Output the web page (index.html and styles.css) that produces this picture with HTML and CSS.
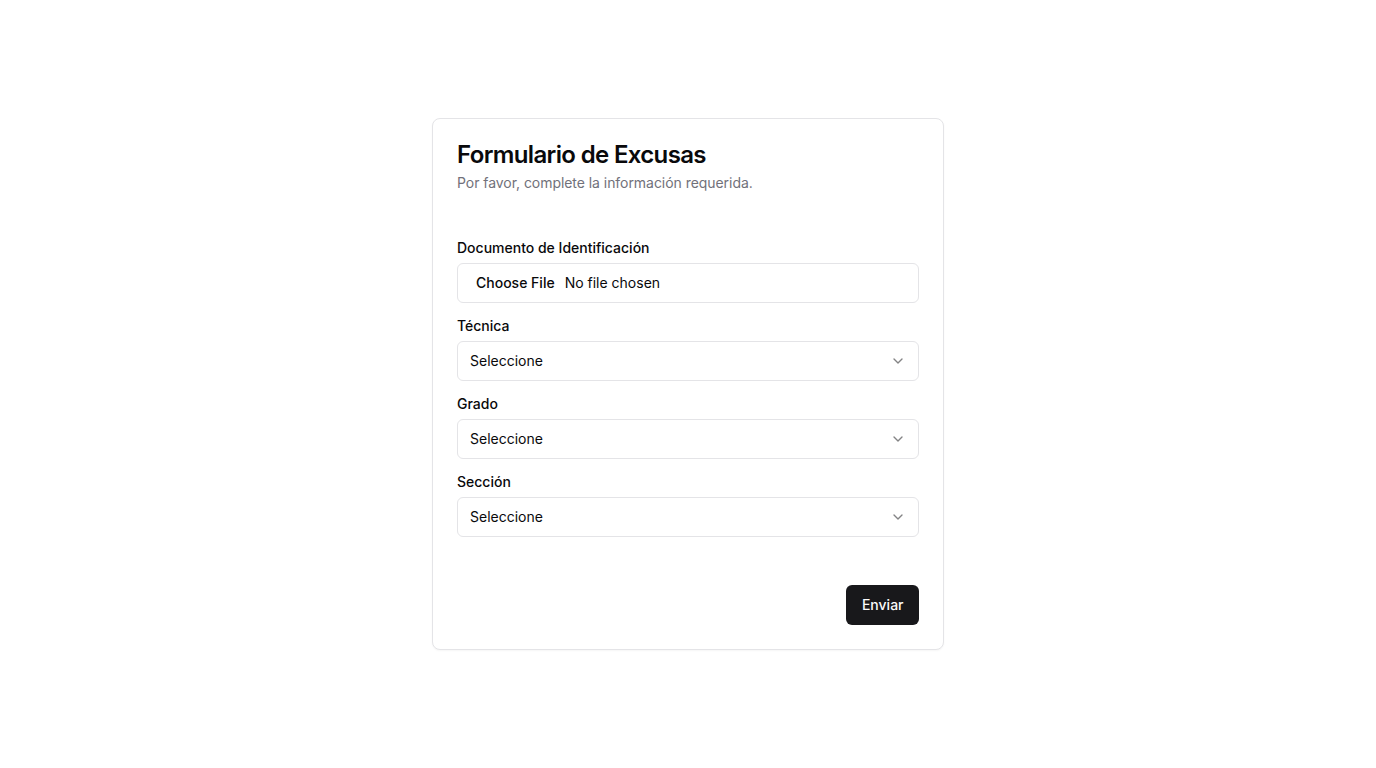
FILE: index.html
```html
<!DOCTYPE html>
<html lang="es">
<head>
<meta charset="utf-8">
<title>Formulario de Excusas</title>
<link rel="stylesheet" href="styles.css">
</head>
<body>
<main class="page">
  <section class="card">
    <header class="card-header">
      <h1 class="card-title">Formulario de Excusas</h1>
      <p class="card-desc">Por favor, complete la información requerida.</p>
    </header>
    <form class="form">
      <div class="fields">
        <div class="field">
          <span class="label">Documento de Identificación</span>
          <label class="control file-control">
            <span class="file-btn">Choose File</span>
            <span class="file-name">No file chosen</span>
            <input type="file" class="file-input">
          </label>
        </div>
        <div class="field">
          <span class="label">Técnica</span>
          <button type="button" class="control select">
            <span>Seleccione</span>
            <svg class="chev" viewBox="0 0 24 24" width="16" height="16" fill="none" stroke="currentColor" stroke-width="2" stroke-linecap="round" stroke-linejoin="round"><path d="m6 9 6 6 6-6"/></svg>
          </button>
        </div>
        <div class="field">
          <span class="label">Grado</span>
          <button type="button" class="control select">
            <span>Seleccione</span>
            <svg class="chev" viewBox="0 0 24 24" width="16" height="16" fill="none" stroke="currentColor" stroke-width="2" stroke-linecap="round" stroke-linejoin="round"><path d="m6 9 6 6 6-6"/></svg>
          </button>
        </div>
        <div class="field">
          <span class="label">Sección</span>
          <button type="button" class="control select">
            <span>Seleccione</span>
            <svg class="chev" viewBox="0 0 24 24" width="16" height="16" fill="none" stroke="currentColor" stroke-width="2" stroke-linecap="round" stroke-linejoin="round"><path d="m6 9 6 6 6-6"/></svg>
          </button>
        </div>
      </div>
      <div class="actions">
        <button type="submit" class="btn">Enviar</button>
      </div>
    </form>
  </section>
</main>
</body>
</html>
```
FILE: styles.css
```css
* { box-sizing: border-box; }
html, body { margin: 0; padding: 0; }
body {
  font-family: Inter, "Noto Sans", sans-serif;
  color: #09090b;
  background: #ffffff;
}
.page {
  min-height: 100vh;
  display: flex;
  align-items: center;
  justify-content: center;
}
.card {
  width: 512px;
  border: 1px solid #e4e4e7;
  border-radius: 8px;
  background: #fff;
  box-shadow: 0 1px 2px rgba(0,0,0,0.04);
  padding: 24px;
}
.card-header {
  display: flex;
  flex-direction: column;
  gap: 6px;
}
.card-title {
  margin: 0;
  font-size: 24px;
  line-height: 24px;
  font-weight: 600;
  letter-spacing: -0.65px;
}
.card-desc {
  margin: 0;
  font-size: 14px;
  line-height: 20px;
  color: #71717a;
  letter-spacing: -0.05px;
}
.form {
  margin-top: 44px;
}
.fields {
  display: flex;
  flex-direction: column;
  gap: 12px;
}
.field {
  display: flex;
  flex-direction: column;
  gap: 5px;
}
.label {
  font-size: 14px;
  line-height: 20px;
  padding-top: 1px;
  font-weight: 500;
}
.control {
  height: 40px;
  width: 100%;
  border: 1px solid #e4e4e7;
  border-radius: 6px;
  background: #fff;
  padding: 0 12px 1px;
  display: flex;
  align-items: center;
  font-family: inherit;
  font-size: 14px;
  color: #09090b;
  margin: 0;
}
.file-control {
  cursor: pointer;
}
.file-btn {
  font-weight: 500;
  padding: 0 6px;
  margin-right: 4px;
}
.file-input {
  display: none;
}
.select {
  justify-content: space-between;
  text-align: left;
  cursor: pointer;
}
.chev {
  opacity: 0.5;
  flex: none;
}
.actions {
  margin-top: 48px;
  display: flex;
  justify-content: flex-end;
}
.btn {
  height: 40px;
  padding: 0 15.5px 1px;
  border: 0;
  border-radius: 6px;
  background: #18181b;
  color: #fafafa;
  font-family: inherit;
  font-size: 14px;
  font-weight: 500;
  cursor: pointer;
}
```
